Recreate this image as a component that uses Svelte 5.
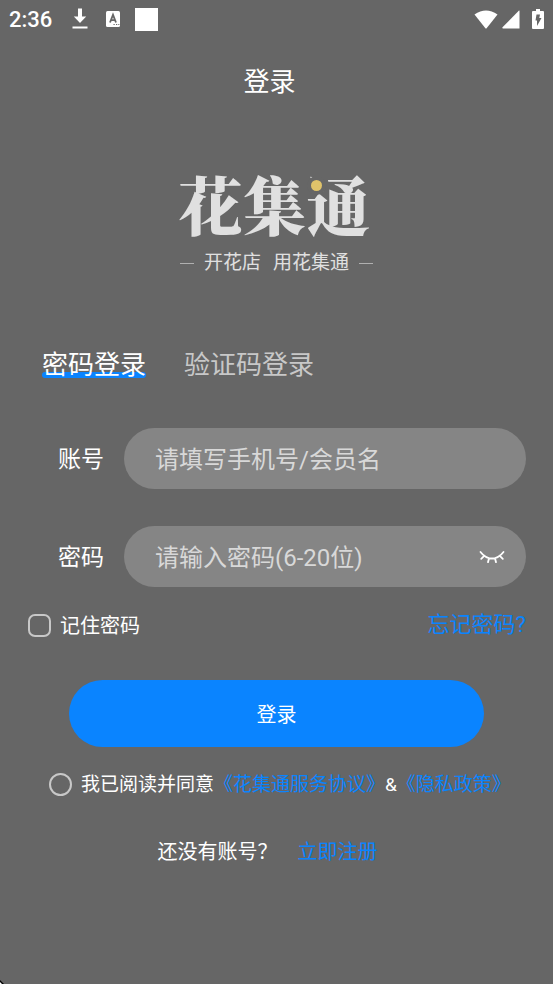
<script>
  let mode = "password";
  let account = "";
  let password = "";
  let showPassword = false;
  let remember = false;
  let agreed = false;

  const modes = [
    { id: "password", label: "密码登录" },
    { id: "code", label: "验证码登录" },
  ];
</script>

<div class="screen">
  <div class="status-bar">
    <div class="status-left">
      <span class="clock">2:36</span>
      <svg class="download" width="16" height="22" viewBox="0 0 16 22" aria-hidden="true">
        <path d="M6 0.500h4v8h4.200L8 15 1.800 8.500H6z" fill="#fff" />
        <rect x="0.500" y="18.500" width="15" height="2" fill="#fff" />
      </svg>
      <svg class="keyboard" width="14" height="16" viewBox="0 0 14 16" aria-hidden="true">
        <rect width="14" height="16" rx="1.500" fill="#fff" />
        <path d="M4 11.500L7 3.800l3 7.700M5.200 9.100h3.600" fill="none" stroke="#666" stroke-width="1.800" />
        <path d="M7.500 13.500h1.200M10 13.500h1.200M12.300 13.500h1" stroke="#666" stroke-width="1.200" />
      </svg>
      <span class="block"></span>
    </div>
    <div class="status-right">
      <svg width="24" height="19" viewBox="0 0 24 19" aria-hidden="true">
        <path d="M0.500 4.500Q12 -3.500 23.500 4.500L12.800 18Q12 19 11.200 18z" fill="#fff" />
      </svg>
      <svg class="signal" width="18" height="19" viewBox="0 0 18 19" aria-hidden="true">
        <path d="M17 0.500Q17.500 0.300 17.500 1V18.500H1Q0 18.200 0.500 17.300z" fill="#fff" />
      </svg>
      <svg width="12" height="20" viewBox="0 0 12 20" aria-hidden="true">
        <path d="M4 0h4v2h3q1 0 1 1v16q0 1-1 1H1q-1 0-1-1V3q0-1 1-1h3z" fill="#fff" />
        <path d="M4.500 5.500h3.500L7.300 9H9.500L5 17V11.500H3.500z" fill="#666" />
      </svg>
    </div>
  </div>

  <h1>登录</h1>

  <div class="brand">
    <div class="logo">花集通<span class="dot"></span></div>
    <div class="tagline">
      <span class="dash"></span>
      <span class="slogan"><span>开花店</span><span>用花集通</span></span>
      <span class="dash"></span>
    </div>
  </div>

  <form on:submit|preventDefault>
    <div class="tabs">
      {#each modes as m}
        <button
          type="button"
          class="tab"
          class:active={mode === m.id}
          on:click={() => (mode = m.id)}
        >
          {m.label}
        </button>
      {/each}
    </div>

    <div class="fields">
      <div class="field">
        <label for="account">账号</label>
        <div class="box">
          <input id="account" type="text" placeholder="请填写手机号/会员名" bind:value={account} />
        </div>
      </div>
      <div class="field">
        <label for="password">密码</label>
        <div class="box">
          <input
            id="password"
            type={showPassword ? "text" : "password"}
            placeholder="请输入密码(6-20位)"
            value={password}
            on:input={(e) => (password = e.target.value)}
          />
          <button
            type="button"
            class="eye"
            aria-label="显示密码"
            on:click={() => (showPassword = !showPassword)}
          >
            <svg width="26" height="14" viewBox="0 0 26 14" aria-hidden="true">
              <path
                d="M1.500 2Q6.500 8.500 13 8.500T24.500 2M5.200 5.800L2.200 8.800M10 8.200L9 12.200M16 8.200L17 12.200M20.800 5.800L23.800 8.800"
                fill="none"
                stroke="#fff"
                stroke-width="1.800"
                stroke-linecap="round"
              />
            </svg>
          </button>
        </div>
      </div>
    </div>

    <div class="options">
      <label class="remember">
        <input type="checkbox" bind:checked={remember} />
        <span>记住密码</span>
      </label>
      <a class="forgot" href="#forgot">忘记密码?</a>
    </div>

    <button type="submit" class="submit">登录</button>

    <div class="agreement">
      <label>
        <input class="round" type="checkbox" bind:checked={agreed} />
        <span>我已阅读并同意</span>
      </label>
      <a href="#terms">《花集通服务协议》</a>
      <span>&amp;</span>
      <a href="#privacy">《隐私政策》</a>
    </div>
  </form>

  <p class="signup">
    <span>还没有账号？</span>
    <a href="#register">立即注册</a>
  </p>

  <svg class="corner" width="4" height="4" viewBox="0 0 4 4" aria-hidden="true">
    <path d="M0 0L4 4H0z" fill="#000" />
    <path d="M0 2L2 4H0z" fill="#fff" />
  </svg>
</div>

<style>
  :global(body) {
    background: #666;
  }

  .screen {
    box-sizing: border-box;
    position: relative;
    min-height: 100vh;
    background: #666;
    color: #fff;
    font-family: Roboto, "Noto Sans CJK SC", sans-serif;
    font-size: 20px;
    line-height: 30px;
  }

  button,
  input {
    border: none;
    background: none;
    margin: 0;
    padding: 0;
    color: inherit;
    font: inherit;
  }

  button {
    cursor: pointer;
  }

  a {
    color: #0a84ff;
    text-decoration: none;
  }

  .status-bar {
    display: flex;
    justify-content: space-between;
    align-items: center;
    height: 38px;
    padding: 0 9px;
  }

  .status-left,
  .status-right {
    display: flex;
    align-items: center;
  }

  .clock {
    padding-top: 2px;
    font-size: 22px;
    font-weight: 500;
  }

  .download {
    margin-left: 20px;
  }

  .keyboard {
    margin-left: 18px;
  }

  .block {
    width: 23px;
    height: 23px;
    margin-left: 15px;
    background: #fff;
  }

  .signal {
    margin: 0 12px 0 4px;
  }

  h1 {
    margin: 25px 0 0;
    padding-right: 14px;
    font-size: 26px;
    font-weight: 400;
    line-height: 38px;
    text-align: center;
  }

  .brand {
    display: flex;
    flex-direction: column;
    align-items: center;
    margin-top: 55px;
    color: #e0e0e0;
  }

  .logo {
    position: relative;
    margin-right: 4px;
    font-family: "Noto Serif CJK SC", "Noto Sans CJK SC", serif;
    font-size: 64px;
    font-weight: 900;
    line-height: 92px;
  }

  /* the ring hides the dot stroke of the last character */
  .dot {
    position: absolute;
    top: 24px;
    left: 132px;
    width: 11px;
    height: 11px;
    border-radius: 50%;
    background: #e0c36a;
    box-shadow: 0 0 0 4px #666;
  }

  .tagline {
    display: flex;
    align-items: center;
    gap: 10px;
    font-size: 19px;
  }

  .slogan {
    display: flex;
    gap: 12px;
  }

  .dash {
    width: 14px;
    height: 1px;
    background: #b0b0b0;
  }

  .tabs {
    display: flex;
    gap: 38px;
    margin-top: 68px;
    padding: 0 42px;
  }

  .tab {
    position: relative;
    z-index: 0;
    font-size: 26px;
    line-height: 38px;
    color: #c8c8c8;
  }

  .tab.active {
    color: #fff;
  }

  .tab.active::before {
    content: "";
    position: absolute;
    z-index: -1;
    right: 0;
    bottom: 6px;
    left: 0;
    height: 6px;
    border-radius: 3px;
    background: #0a84ff;
  }

  .fields {
    display: grid;
    gap: 37px;
    padding: 0 27px 0 58px;
    margin-top: 44px;
  }

  .field {
    display: flex;
    align-items: center;
    gap: 20px;
    font-size: 23px;
  }

  .field label {
    padding-top: 2px;
  }

  .box {
    display: flex;
    flex: 1;
    align-items: center;
    min-width: 0;
    height: 61px;
    box-sizing: border-box;
    padding: 0 21px 0 31px;
    border-radius: 31px;
    background: #858585;
  }

  .box input {
    flex: 1;
    min-width: 0;
    padding-top: 2px;
    font-size: 24px;
    outline: none;
  }

  .box input::placeholder {
    color: #d8d8d8;
    opacity: 1;
  }

  .eye {
    display: flex;
  }

  .options {
    display: flex;
    justify-content: space-between;
    align-items: center;
    margin-top: 22px;
    padding: 0 27px 0 28px;
  }

  .options label,
  .agreement label {
    display: flex;
    align-items: center;
    gap: 9px;
  }

  .options span,
  .agreement span,
  .agreement a {
    padding-top: 2px;
  }

  input[type="checkbox"] {
    appearance: none;
    box-sizing: border-box;
    width: 23px;
    height: 23px;
    border: 2px solid #c8c8c8;
    border-radius: 7px;
  }

  input[type="checkbox"].round {
    border-radius: 50%;
  }

  input[type="checkbox"]:checked {
    border-color: #0a84ff;
    background: #0a84ff;
  }

  .forgot {
    font-size: 22px;
  }

  .submit {
    display: block;
    width: 75%;
    height: 67px;
    margin: 39px auto 0;
    padding-top: 2px;
    border-radius: 34px;
    background: #0a84ff;
  }

  .agreement {
    display: flex;
    align-items: center;
    margin-top: 21px;
    padding-left: 49px;
    font-size: 19px;
    white-space: nowrap;
  }

  .signup {
    display: flex;
    justify-content: center;
    gap: 20px;
    margin: 37px 0 0;
    padding-right: 18px;
  }

  .corner {
    position: absolute;
    left: 0;
    bottom: 0;
  }
</style>
